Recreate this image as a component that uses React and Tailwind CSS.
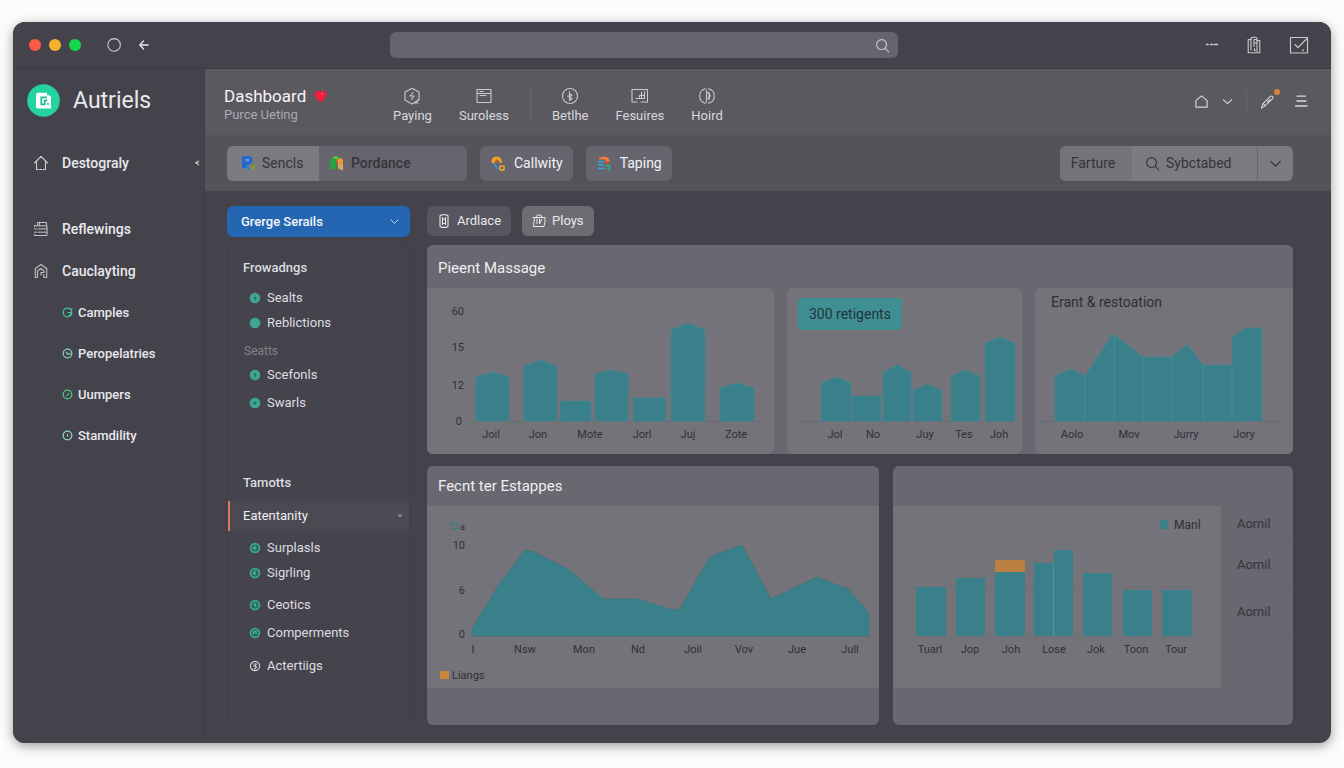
import React from "react";

const TEAL = "#39808a";

function Icon({ size = 16, className = "", children, view = 24, sw = 1.5 }) {
  return (
    <svg
      width={size}
      height={size}
      viewBox={`0 0 ${view} ${view}`}
      fill="none"
      stroke="currentColor"
      strokeWidth={sw}
      strokeLinecap="round"
      strokeLinejoin="round"
      className={`shrink-0 ${className}`}
      aria-hidden="true"
    >
      {children}
    </svg>
  );
}

const ChevronDown = ({ size = 14, className }) => (
  <Icon size={size} view={14} sw={1.2} className={className}>
    <path d="M2.500 5 7 9.300 11.500 5" />
  </Icon>
);

const SearchIcon = ({ size = 16, className }) => (
  <Icon size={size} view={16} sw={1.2} className={className}>
    <circle cx="7" cy="7" r="5.300" />
    <path d="m11 11 3.600 3.800" />
  </Icon>
);

/* ---------- title bar ---------- */

function TitleBar() {
  return (
    <div className="grid grid-cols-[377fr_508fr_433fr] items-center border-b border-[#3a3941] bg-[#44434b] py-2.5 text-[#c9c8ce]">
      <div className="flex items-center pl-4">
        <div className="flex gap-2">
          <span className="size-3 rounded-full bg-[#fb5a45]" />
          <span className="size-3 rounded-full bg-[#f5b02c]" />
          <span className="size-3 rounded-full bg-[#12d84c]" />
        </div>
        <button type="button" aria-label="Reload" className="ml-[25px]">
          <Icon size={16} view={16} sw={1.1}>
            <path d="M8 1.600a6.300 6.300 0 1 0 3.800 1.200C10.800 2 9.400 1.600 8 1.600Z" />
          </Icon>
        </button>
        <button type="button" aria-label="Back" className="ml-[15px]">
          <Icon size={14} view={14} sw={1.3} className="text-[#e4e3e8]">
            <path d="M11.200 7H3M6.500 3 2.800 7l3.700 4" />
          </Icon>
        </button>
      </div>
      <div className="flex h-[26px] items-center rounded-md bg-[#66646e] pr-2">
        <input type="search" aria-label="Address" className="h-full min-w-0 flex-1 bg-transparent px-3 text-sm outline-none" />
        <SearchIcon size={15} />
      </div>
      <div className="flex items-center justify-end gap-[26px] pr-[22px]">
        <button type="button" aria-label="More">
          <Icon size={14} view={14} sw={1.7}>
            <path d="M1.500 6.500h1.600M5.500 6.500h1.800M9.200 6.500h3.300" />
          </Icon>
        </button>
        <button type="button" aria-label="Clipboard">
          <Icon size={18} view={18} sw={1.1}>
            <path d="M6 3.500H3.200v13.200h11.600V4.500H12" />
            <path d="M6 14V2.300L7.500 1.200h3L12 2.300V6" />
            <path d="M9 3.500v7M12 6v9.500M9 3.500h2M9 7h2.500M9.500 12.500v2h1" />
          </Icon>
        </button>
        <button type="button" aria-label="Tasks">
          <Icon size={20} view={20} sw={1.2}>
            <path d="M1.500 2.500h17v15.500h-17z" />
            <path d="m6 9.500 3 3.200L17.500 4" />
            <path d="M14 14.500v1.500" />
          </Icon>
        </button>
      </div>
    </div>
  );
}

/* ---------- sidebar ---------- */

const sideLinks = [
  { label: "Camples", mark: <path d="M6.500 6h4L8 9.500M9 3l2-1" />, tone: "text-[#3fc59f]" },
  { label: "Peropelatries", mark: <path d="M4.500 4.500 6.500 7l2.500-1" />, tone: "text-[#8ad0c4]" },
  { label: "Uumpers", mark: <path d="M5 7.500 7.500 5" />, tone: "text-[#4cc78d]" },
  { label: "Stamdility", mark: <path d="M6 5v1.500" />, tone: "text-[#9ad9d2]" },
];

function Sidebar() {
  return (
    <aside className="w-48 shrink-0 border-r border-[#3f3e46] bg-[#44434b] text-[#e9e8ed]">
      <div className="flex items-center gap-[13px] pt-[15px] pl-3.5">
        <svg width="33" height="33" viewBox="0 0 33 33" aria-hidden="true">
          <circle cx="16.500" cy="16.500" r="16.300" fill="#25d3a0" />
          <path d="M9 11q0-2.300 2.500-2.300h8.500v2.500h1.500q2.500 0 2.500 2.500V22l.5 2.500H11.500Q9 24.500 9 22Z" fill="#fff" />
          <path d="M20 13.300h-5.700v7h3.400v-4h2.500" fill="none" stroke="#1fb98c" strokeWidth="1.700" />
          <path d="M20 20h2" stroke="#1fb98c" strokeWidth="1.500" />
        </svg>
        <span className="text-[23px] leading-[33px]">Autriels</span>
      </div>
      <nav className="font-medium">
        <a href="#home" className="mt-[26px] flex h-10 items-center pr-1 pl-5 text-sm">
          <Icon size={16} view={16} sw={1.1} className="text-[#cfced4]">
            <path d="M1.500 8 8 1.300 14.500 8M3.500 6.500v8h2.300M12.500 6.500v8h-2.300M7 14.500h1.800" />
          </Icon>
          <span className="ml-[13px] flex-1">Destograly</span>
          <svg width="6" height="6" viewBox="0 0 6 6" aria-hidden="true">
            <path d="M5 .8 1.200 2.800 5 5.200 3.500 3Z" fill="#c9c8ce" stroke="#c9c8ce" strokeWidth=".6" />
          </svg>
        </a>
        <a href="#reflewings" className="mt-[25px] flex h-[41px] items-center pl-5 text-sm">
          <Icon size={16} view={16} sw={1} className="text-[#c3c2c8]">
            <path d="M4.500 4.500V1.500h9v3M1.500 4.800h12.500v9.700H1.500M1.500 7.900h2M5 7.900h9M1.500 11.200h2M5 11.200h9M1.500 14.500v-1M1.500 4.800v1M6.500 1.500v3" />
          </Icon>
          <span className="ml-[13px]">Reflewings</span>
        </a>
        <a href="#cauclayting" className="mt-px flex h-[41px] items-center pl-5 text-sm">
          <Icon size={16} view={16} sw={1.1} className="text-[#c3c2c8]">
            <path d="M4 14.500H2.300V5.500L8 1.500l5.700 4v9H12M4.500 14V8L8 5.500 11 8v1.500H8V12M10.800 11.500v3" />
          </Icon>
          <span className="ml-[13px]">Cauclayting</span>
        </a>
        <div className="mt-px">
          {sideLinks.map((l) => (
            <a key={l.label} href="#section" className="flex h-[41px] items-center gap-[5px] pl-[49px] text-[13px]">
              <Icon size={11} view={12} sw={1.3} className={l.tone}>
                <circle cx="6" cy="6" r="4.700" />
                {l.mark}
              </Icon>
              <span>{l.label}</span>
            </a>
          ))}
        </div>
      </nav>
    </aside>
  );
}

/* ---------- header ---------- */

const navIcons = {
  paying: (
    <>
      <path d="M9 1.200 16 5v8l-7 4-7-4V5Z" />
      <path d="M10 5.500 7 9h4l-2.500 3.500M15 16h-3l3-3" />
    </>
  ),
  suroless: <path d="M2 2.500h14v13H2zM2 6.500h14M5 4.500h3M5 8.500h6" />,
  betlhe: (
    <>
      <circle cx="9" cy="9" r="7.500" />
      <path d="M8.500 4.500v9M8.500 7l2.500 1-2.500 2 2.500 1.500-2.500 2M6.500 9h2" />
    </>
  ),
  fesuires: (
    <>
      <path d="M1 2.500h15.500v12.500H10M1 2.500v12.500h5" />
      <path d="M5 11.500h8M10.500 8.500h-2v3M10.500 5v6.500M13.500 4.500v7M10.500 8.500h3" />
    </>
  ),
  hoird: (
    <>
      <path d="M7.500 1.700a7.500 7.500 0 0 0 0 14.600M10.500 1.700a7.500 7.500 0 0 1 0 14.600" />
      <path d="M8.500 3v12M11 5v8M8.500 5.500q4 .5 3.500 4l-2 2" />
    </>
  ),
};

function NavItem({ icon, label }) {
  return (
    <a href="#nav" className="flex flex-col items-center gap-[3px]">
      <Icon size={18} view={18} sw={1.1} className="text-[#c9c8ce]">
        {navIcons[icon]}
      </Icon>
      <span className="text-[13px] leading-4">{label}</span>
    </a>
  );
}

function Header() {
  return (
    <header className="flex h-[66px] items-center bg-[#5a5960] pr-[22px] pl-[19px] text-[#d8d7dc]">
      <div className="w-[169px] pt-1.5">
        <h1 className="flex items-center gap-2 text-[17px] leading-5 text-[#f6f5f8]">
          Dashboard
          <svg width="13" height="13" viewBox="0 0 13 13" aria-hidden="true">
            <path d="M6.500 12.500C3 9.500.6 7 .6 4.200.6 2 2 .8 3.700.8 5 .8 6 1.200 6.500 1.700 7 1.200 8.200.8 9.500.8c1.700 0 3 1.200 3 3.400 0 2.800-2.500 5.300-6 8.300Z" fill="#f01f3d" />
            <path d="M7.500 4.500 9 3.200" stroke="#ff8b98" strokeWidth="1" />
          </svg>
        </h1>
        <p className="text-[13px] leading-[18px] text-[#aaa8b0]">Purce Ueting</p>
      </div>
      <nav className="flex items-center gap-[27px] pt-1.5">
        <NavItem icon="paying" label="Paying" />
        <NavItem icon="suroless" label="Suroless" />
        <span className="-mx-1.5 h-9 w-px bg-[#66656d]" />
        <NavItem icon="betlhe" label="Betlhe" />
        <NavItem icon="fesuires" label="Fesuires" />
        <NavItem icon="hoird" label="Hoird" />
      </nav>
      <div className="ml-auto flex items-center pb-0.5">
        <button type="button" aria-label="Home">
          <Icon size={15} view={16} sw={1.2}>
            <path d="M2 14V7l6-5 6 5v7Z" />
          </Icon>
        </button>
        <button type="button" aria-label="Open home menu" className="ml-3">
          <ChevronDown size={13} />
        </button>
        <span className="mx-3 h-6 w-px bg-[#66656d]" />
        <button type="button" aria-label="Edit" className="relative">
          <Icon size={17} view={18} sw={1.1}>
            <path d="m2.500 16 1.500-4.500L11.500 4q1.700-1.500 2.800-.5T13.800 6.500L6.500 13.500ZM4.500 11l2 2.500M9 9.500l2.500-2.500" />
          </Icon>
          <span className="absolute -top-1 -right-1 size-1.5 rounded-full bg-[#d8853c]" />
        </button>
        <button type="button" aria-label="Menu" className="ml-[17px]">
          <Icon size={16} view={16} sw={1.3}>
            <path d="M4 3.200h8.500M4 8h9M2.500 13h11.500" />
          </Icon>
        </button>
      </div>
    </header>
  );
}

/* ---------- toolbar ---------- */

function Toolbar() {
  return (
    <div className="flex h-14 items-center bg-[#54535a] pr-[38px] pl-[22px] text-sm">
      <div className="flex h-[35px] w-60 overflow-hidden rounded-md bg-[#66656d] text-[#35343b]">
        <button type="button" className="flex w-[92px] items-center gap-1.5 bg-[#7c7b82] pl-3.5">
          <svg width="15" height="16" viewBox="0 0 15 16" aria-hidden="true">
            <path d="M1 1h6.500q4 0 4 4t-4 4.500H6V13H1Z" fill="#2367d1" />
            <path d="M4.500 4H8v2.300H4.500z" fill="#7c9ad0" />
            <path d="M5 10q3.500.5 4 5.500-4-.5-4-5.500Z" fill="#1f7fd8" />
            <path d="M9 15.500q0-5 5-6Q15 14.500 9 15.500Z" fill="#7f9f35" />
            <path d="m10 13.500 3-3" stroke="#b5823c" strokeWidth="1" />
          </svg>
          Sencls
        </button>
        <button type="button" className="flex flex-1 items-center gap-[7px] pl-2.5 font-medium">
          <svg width="15" height="16" viewBox="0 0 15 16" aria-hidden="true">
            <path d="M1 6 5 1.500h5L12 3v4.500H8V14H1Z" fill="#1f9d45" />
            <path d="M1 6h5.500v8H1z" fill="#27a33f" />
            <path d="M3 3.800 5 1.500h4.500L8.500 4Z" fill="#6cbf45" />
            <path d="M8 4 12.500 3 14 5v3.500H8z" fill="#f0962c" />
            <path d="M9 8.500h5V15.500L9 13.500Z" fill="#e5a25b" />
            <path d="M7.200 5.500h1.300V10H7.200z" fill="#c6473a" />
          </svg>
          Pordance
        </button>
      </div>
      <button type="button" className="ml-[13px] flex h-[35px] items-center gap-[7px] rounded-md bg-[#66656d] px-2.5 text-[#f2f1f5]">
        <svg width="17" height="17" viewBox="0 0 17 17" aria-hidden="true">
          <path d="M1.500 8Q1 1.500 6.500 1.500T12 7.500L9.500 8Q9.500 5 7 5T5 8.500Z" fill="#f2a02c" />
          <path d="M6 4.500h2v3H6z" fill="#c45a35" />
          <path d="m3 9 2.500 0 3.500 4.500L7.500 15Z" fill="#2f8fd8" />
          <circle cx="12" cy="13" r="2.200" fill="none" stroke="#f0a42f" strokeWidth="1.600" />
        </svg>
        Callwity
      </button>
      <button type="button" className="ml-[13px] flex h-[35px] items-center gap-[7px] rounded-md bg-[#66656d] px-2.5 text-[#f2f1f5]">
        <svg width="17" height="17" viewBox="0 0 17 17" aria-hidden="true">
          <path d="M3 4.500V2.500L8 1.500l4 1 2 4-3 .5-2-2.500Z" fill="#ee7b38" />
          <path d="M2 6.700h5.500M2 9.800h5.500M2 13.500h7" stroke="#37a5d0" strokeWidth="1.700" />
          <path d="M8 6h4.500v2.500H8z" fill="#c4553f" />
          <path d="M9 10.500h5.500M10.500 13.500h1M13.500 10.500v5.500" stroke="#2cae8a" strokeWidth="1.700" />
        </svg>
        Taping
      </button>
      <div className="ml-auto flex h-[35px] overflow-hidden rounded-md bg-[#7c7b82] text-[#35343b]">
        <button type="button" className="w-[72px] bg-[#74737a] pr-1.5">Farture</button>
        <label className="flex w-[125px] items-center gap-1.5 border-l border-[#7f7e85] pl-3">
          <SearchIcon size={15} />
          <input type="search" aria-label="Search" defaultValue="Sybctabed" className="w-full min-w-0 bg-transparent outline-none" />
        </label>
        <button type="button" aria-label="Search options" className="flex w-9 items-center justify-center border-l border-[#69686f]">
          <ChevronDown size={15} />
        </button>
      </div>
    </div>
  );
}

/* ---------- filter column ---------- */

const marks = {
  tick: <path d="M4.500 5.500h2V8M6 3.500v1" />,
  none: null,
  drop: <path d="M6 3.500v4.500M4.500 5v2" />,
  dot: <circle cx="6" cy="6" r="1" />,
  curve: <path d="M8 6H5.500M8 4.500Q4 3.500 4.500 7" />,
};

function Bullet({ mark, variant }) {
  if (variant === "outline") {
    return (
      <Icon size={12} view={12} sw={1.2} className="text-[#d4d3d8]">
        <circle cx="6" cy="6" r="4.600" />
        <path d="M5 4h2.500L6 6l1.500 1L5.500 9M6 6H4.500" />
      </Icon>
    );
  }
  return (
    <svg width="12" height="12" viewBox="0 0 12 12" className="shrink-0" aria-hidden="true">
      <circle cx="6" cy="6" r="5.300" fill="#3fa592" />
      {variant === "ring" && <circle cx="6" cy="6" r="3.600" fill="#246e60" />}
      <g fill="none" stroke={variant === "ring" ? "#5bb8a3" : "#1c6e62"} strokeWidth="1.200">
        {marks[mark]}
      </g>
    </svg>
  );
}

function FilterItem({ label, mark = "none", variant = "solid" }) {
  return (
    <li>
      <a href="#filter" className="flex h-6 items-center gap-1.5 pl-[21px] text-[13px] text-[#dddce1]">
        <Bullet mark={mark} variant={variant} />
        {label}
      </a>
    </li>
  );
}

function FilterColumn() {
  return (
    <div className="flex w-[183px] shrink-0 flex-col gap-2">
      <div className="relative">
        <select
          aria-label="Group"
          className="block h-[31px] w-full appearance-none rounded-md bg-[#2566b2] pr-8 pl-3.5 text-[13px] font-medium text-[#f4f6fb] outline-none"
        >
          <option>Grerge Serails</option>
        </select>
        <ChevronDown size={11} className="pointer-events-none absolute top-2.5 right-2.5 text-[#cfe0f5]" />
      </div>
      <div className="flex-1 rounded-md border border-[#3f3e46] bg-[#45444c] pt-[7px]">
        <h2 className="flex h-[30px] items-center pl-[15px] text-[13px] font-medium text-[#dddce1]">Frowadngs</h2>
        <ul className="mt-[3px] space-y-px">
          <FilterItem label="Sealts" mark="tick" />
          <FilterItem label="Reblictions" />
        </ul>
        <h3 className="mt-1 flex h-6 items-center pl-4 text-xs text-[#828189]">Seatts</h3>
        <ul className="space-y-1">
          <FilterItem label="Scefonls" mark="tick" />
          <FilterItem label="Swarls" mark="dot" />
        </ul>
        <h2 className="mt-[53px] flex h-[30px] items-center pl-[15px] text-[13px] font-medium text-[#dddce1]">Tamotts</h2>
        <button
          type="button"
          className="mt-[3px] flex h-[30px] w-full items-center justify-between border-l-2 border-[#d97a58] bg-[#4b4a52] pr-1.5 pl-[13px] text-[13px] text-[#f0eff3]"
        >
          Eatentanity
          <svg width="6" height="4" viewBox="0 0 6 4" aria-hidden="true">
            <path d="M0 .5h6L3 3.500Z" fill="#8b8a92" />
          </svg>
        </button>
        <ul className="mt-[5px] space-y-px">
          <FilterItem label="Surplasls" mark="drop" variant="ring" />
          <FilterItem label="Sigrling" mark="drop" variant="ring" />
        </ul>
        <hr className="mx-2.5 mt-1 mb-[3px] border-[#403f47]" />
        <ul className="space-y-1">
          <FilterItem label="Ceotics" mark="tick" variant="ring" />
          <FilterItem label="Comperments" mark="curve" variant="ring" />
        </ul>
        <ul className="mt-[9px]">
          <FilterItem label="Actertiigs" variant="outline" />
        </ul>
      </div>
    </div>
  );
}

/* ---------- charts ---------- */

function Chart({ w, h, title, children }) {
  return (
    <svg viewBox={`0 0 ${w} ${h}`} className="block w-full text-[11px]" fill="#302f36" role="img" aria-label={title}>
      {children}
    </svg>
  );
}

const XLabels = ({ items, y }) =>
  items.map(([x, t], i) => (
    <text key={i} x={x} y={y} textAnchor="middle">
      {t}
    </text>
  ));

const Peaked = ({ bars, base }) =>
  bars.map(([x, w, shoulder, peak], i) => (
    <path
      key={i}
      fill={TEAL}
      stroke="#438b93"
      strokeWidth=".6"
      d={`M${x} ${base}V${shoulder}${peak === undefined ? "" : `L${x + w / 2} ${peak}`}L${x + w} ${shoulder}V${base}Z`}
    />
  ));

function MessageChart() {
  return (
    <Chart w={347} h={166} title="Messages">
      <path d="M45 133.500H338" stroke="#6b6971" />
      {[[27, "60"], [63, "15"], [101, "12"], [137, "0"]].map(([y, t]) => (
        <text key={t} x={t === "0" ? 35 : 37} y={y} textAnchor="end">
          {t}
        </text>
      ))}
      <Peaked
        base={133}
        bars={[[49, 33, 89, 84], [97, 33, 78, 72], [133, 31, 113], [168, 33, 86, 82], [206, 33, 110], [244, 34, 42, 35], [293, 34, 100, 95]]}
      />
      <XLabels y={150} items={[[64, "Joil"], [111, "Jon"], [163, "Mote"], [215, "Jorl"], [261, "Juj"], [309, "Zote"]]} />
    </Chart>
  );
}

function RecipientChart() {
  return (
    <Chart w={235} h={124} title="Recipients">
      <path d="M10 91.500H229" stroke="#6b6971" />
      <Peaked
        base={91}
        bars={[[34, 30, 53, 47], [65, 29, 66], [96, 28, 42, 35], [126, 29, 60, 54], [164, 29, 46, 40], [198, 30, 13, 7]]}
      />
      <XLabels y={108} items={[[48, "Jol"], [86, "No"], [138, "Juy"], [177, "Tes"], [212, "Joh"]]} />
    </Chart>
  );
}

function RestorationChart() {
  return (
    <Chart w={258} h={138} title="Brand">
      <path d="M5 105.500H247" stroke="#6b6971" />
      <path
        fill={TEAL}
        stroke="#438b93"
        strokeWidth=".6"
        d="M20 105V60L36 53 50 60 77 19 80 19 108 41H137L151 29 154 30 168 49H197V21L211 12H227V105Z"
      />
      <path d="M50 60V105M79 19V105M108 41V105M137 41V105M168 49V105M197 49V105" stroke="#4c939a" strokeWidth=".7" />
      <XLabels y={122} items={[[37, "Aolo"], [94, "Mov"], [151, "Jurry"], [209, "Jory"]]} />
    </Chart>
  );
}

function AreaChart() {
  return (
    <Chart w={452} h={182} title="Area by month">
      <path d="M45 35.500H446M45 81.500H446M45 130.500H452" stroke="#6f6d75" />
      <path
        fill={TEAL}
        stroke="#35757e"
        strokeWidth=".6"
        d="M45 130V123L71 80 98 44 107 46 141 63 176 93H211L246 104 253 103 282 52 290 48 315 39 344 93 390 71 421 83 442 107V130Z"
      />
      <rect x="25" y="17" width="5" height="6" fill="none" stroke="#2e7c86" />
      <text x="38" y="24" textAnchor="end" className="text-[9px]">a</text>
      <text x="38" y="43" textAnchor="end">10</text>
      <text x="38" y="88" textAnchor="end">6</text>
      <text x="38" y="132" textAnchor="end">0</text>
      <XLabels
        y={147}
        items={[[46, "I"], [98, "Nsw"], [157, "Mon"], [211, "Nd"], [266, "Joil"], [317, "Vov"], [370, "Jue"], [423, "Jull"]]}
      />
      <rect x="13" y="165" width="9" height="8" fill="#c8853b" />
      <text x="25" y="173">Liangs</text>
    </Chart>
  );
}

const monthBars = [[23, 30, 81], [63, 29, 72], [102, 30, 66], [141, 19, 57], [161, 19, 44], [190, 29, 67], [230, 29, 84], [269, 30, 84]];

function MonthChart() {
  return (
    <Chart w={328} h={182} title="Bars by month">
      <path d="M0 35.500H328M0 81.500H328M3 130.500H328" stroke="#6f6d75" />
      {monthBars.map(([x, w, y]) => (
        <rect key={x} x={x} y={y} width={w} height={130 - y} fill={TEAL} />
      ))}
      <path d="M160.500 57V130" stroke="#579299" />
      <rect x="102" y="54" width="30" height="12" fill="#ba8040" />
      <rect x="267" y="14" width="8" height="9" fill={TEAL} />
      <text x="281" y="23" className="text-xs">Manl</text>
      <XLabels
        y={147}
        items={[[37, "Tuarl"], [77, "Jop"], [118, "Joh"], [161, "Lose"], [203, "Jok"], [243, "Toon"], [283, "Tour"]]}
      />
    </Chart>
  );
}

/* ---------- dashboard ---------- */

function Dashboard() {
  return (
    <div className="min-w-0 flex-1">
      <div className="flex gap-[11px]">
        <button type="button" className="flex h-[30px] items-center gap-1.5 rounded-md bg-[#57565e] px-2.5 text-[13px] text-[#e9e8ec]">
          <Icon size={14} view={14} sw={1.1}>
            <path d="M3 1.800 5 .8h4l2 1v10.700l-2 .9H5l-2-.9ZM5.500 3.500v7M8.500 3.500v7M5.500 5h3M5.500 9.500h3" />
          </Icon>
          Ardlace
        </button>
        <button type="button" className="flex h-[30px] items-center gap-1.5 rounded-md bg-[#6d6c73] px-2.5 text-[13px] text-[#e9e8ec]">
          <Icon size={14} view={14} sw={1}>
            <path d="M1 3.500h12v4l-1 5H1.500L2.500 3.500M4 3.500q0-2.700 3-2.700t3 2.700M5 5v4.500M7.500 5v5l2-4.500" />
          </Icon>
          Ploys
        </button>
      </div>

      <section className="mt-[9px] overflow-hidden rounded-md bg-[#69676f]">
        <h2 className="flex h-[43px] items-center pt-1 pl-[11px] text-[15px] text-[#f0eff3]">Pieent Massage</h2>
        <div className="grid grid-cols-[347fr_235fr_258fr] gap-x-[13px]">
          <div className="rounded-r-md bg-[#75737a]">
            <MessageChart />
          </div>
          <div className="rounded-md bg-[#75737a]">
            <div className="px-[11px] pt-2.5">
              <span className="inline-flex h-8 items-center rounded-sm bg-[#3f8f92] px-[11px] text-sm text-[#22333a]">300 retigents</span>
            </div>
            <RecipientChart />
          </div>
          <div className="rounded-l-md bg-[#75737a]">
            <h3 className="h-7 pt-1.5 pl-4 text-sm leading-4 text-[#2f2e35]">Erant &amp; restoation</h3>
            <RestorationChart />
          </div>
        </div>
      </section>

      <div className="mt-3 grid grid-cols-[452fr_400fr] gap-x-3.5">
        <section className="overflow-hidden rounded-md bg-[#69676f] pb-[37px]">
          <h2 className="flex h-10 items-center pl-[11px] text-[15px] text-[#f0eff3]">Fecnt ter Estappes</h2>
          <div className="bg-[#75737a]">
            <AreaChart />
          </div>
        </section>
        <section className="overflow-hidden rounded-md bg-[#69676f] pt-10">
          <div className="grid grid-cols-[328fr_72fr]">
            <div className="bg-[#75737a]">
              <MonthChart />
            </div>
            <ul className="text-[13px] text-[#35343b]">
              <li className="flex h-9 items-center border-b border-[#64626a] pl-4">Aomil</li>
              <li className="flex h-[46px] items-center border-b border-[#64626a] pl-4">Aomil</li>
              <li className="flex h-[49px] items-center border-b border-[#64626a] pl-4">Aomil</li>
            </ul>
          </div>
        </section>
      </div>
    </div>
  );
}

export default function App() {
  return (
    <div className="min-h-screen bg-[#fcfcfc] px-[13px] pt-[22px] pb-[25px] font-['Roboto','Liberation_Sans',sans-serif]">
      <div className="overflow-hidden rounded-xl bg-[#44434b] shadow-[0_3px_12px_rgba(40,45,50,0.45)]">
        <TitleBar />
        <div className="flex">
          <Sidebar />
          <main className="min-w-0 flex-1">
            <Header />
            <Toolbar />
            <div className="flex gap-[17px] pt-[15px] pr-[38px] pb-[18px] pl-[22px]">
              <FilterColumn />
              <Dashboard />
            </div>
          </main>
        </div>
      </div>
    </div>
  );
}
